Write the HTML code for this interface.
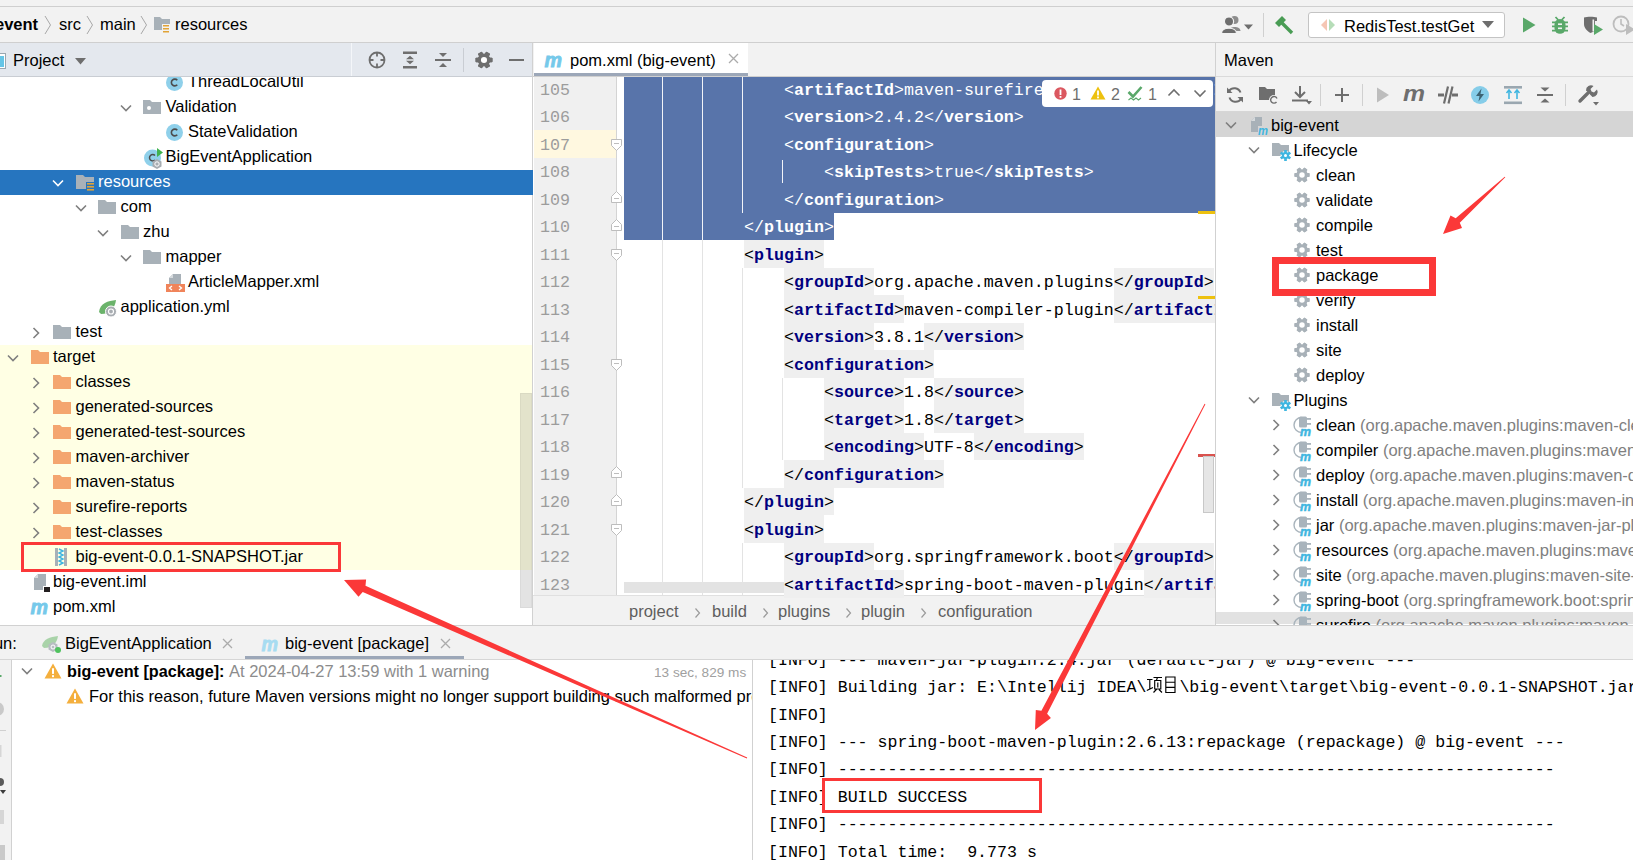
<!DOCTYPE html><html><head><meta charset="utf-8"><style>
html,body{margin:0;padding:0;width:1633px;height:860px;overflow:hidden;background:#F2F2F2;position:relative;font-family:"Liberation Sans",sans-serif}
div{position:absolute;box-sizing:border-box}
.t{white-space:pre}
</style></head><body>
<div style="left:0px;top:0px;width:1633px;height:6px;background:#F2F2F2;"></div>
<div style="left:0px;top:6px;width:1633px;height:1px;background:#CFCFCF;"></div>
<div style="left:0px;top:7px;width:1633px;height:35px;background:#F2F2F2;"></div>
<div style="left:0px;top:42px;width:1633px;height:1px;background:#CFCFCF;"></div>
<div style="left:0px;top:43px;width:533px;height:33px;background:#E4E8EE;"></div>
<div style="left:0px;top:76px;width:533px;height:1px;background:#C9CDD3;"></div>
<div style="left:0px;top:77px;width:533px;height:548px;background:#FFFFFF;"></div>
<div style="left:532px;top:43px;width:1px;height:582px;background:#D1D1D1;"></div>
<div style="left:533px;top:43px;width:682px;height:33px;background:#F2F2F2;"></div>
<div style="left:534px;top:43px;width:214px;height:30px;background:#FFFFFF;"></div>
<div style="left:534px;top:73px;width:214px;height:3px;background:#9CA7B8;"></div>
<div style="left:533px;top:76px;width:682px;height:1px;background:#CFCFCF;"></div>
<div style="left:533px;top:77px;width:682px;height:518px;background:#FFFFFF;"></div>
<div style="left:534px;top:77px;width:83px;height:518px;background:#F0F0F0;"></div>
<div style="left:533px;top:595px;width:682px;height:30px;background:#F2F2F2;"></div>
<div style="left:533px;top:595px;width:682px;height:1px;background:#E0E0E0;"></div>
<div style="left:1215px;top:43px;width:1px;height:582px;background:#D1D1D1;"></div>
<div style="left:1216px;top:43px;width:417px;height:68px;background:#F2F2F2;"></div>
<div style="left:1216px;top:111px;width:417px;height:1px;background:#D6D6D6;"></div>
<div style="left:1216px;top:112px;width:417px;height:513px;background:#FFFFFF;"></div>
<div style="left:0px;top:625px;width:1633px;height:1px;background:#D1D1D1;"></div>
<div style="left:0px;top:626px;width:1633px;height:33px;background:#F2F2F2;"></div>
<div style="left:0px;top:659px;width:1633px;height:1px;background:#D6D6D6;"></div>
<div style="left:0px;top:660px;width:11px;height:200px;background:#F2F2F2;"></div>
<div style="left:11px;top:660px;width:1px;height:200px;background:#D1D1D1;"></div>
<div style="left:12px;top:660px;width:740px;height:200px;background:#FFFFFF;"></div>
<div style="left:752px;top:660px;width:1px;height:200px;background:#D1D1D1;"></div>
<div style="left:753px;top:660px;width:880px;height:200px;background:#FFFFFF;"></div>
<div style="left:0px;top:170px;width:533px;height:25px;background:#2675BF;"></div>
<div style="left:0px;top:345px;width:532px;height:225px;background:#FFFFE4;"></div>
<svg style="position:absolute;left:164.5px;top:73px;" width="19" height="19" viewBox="0 0 19 19"><circle cx="9.5" cy="9.5" r="8.5" fill="#8FD0EA"/><path d="M12.3 7.2 A3.4 3.4 0 1 0 12.3 11.8" fill="none" stroke="#4D4D4D" stroke-width="1.6"/></svg>
<div class="t" style="left:188.0px;top:69px;font-size:16.5px;line-height:25px;color:#000;font-weight:400;font-family:'Liberation Sans', sans-serif;">ThreadLocalUtil</div>
<svg style="position:absolute;left:118.5px;top:102.5px;" width="14" height="10" viewBox="0 0 14 10"><path d="M2 2.5 L7 7.5 L12 2.5" fill="none" stroke="#7F7F7F" stroke-width="1.6"/></svg>
<svg style="position:absolute;left:142.0px;top:97.5px;" width="20" height="18" viewBox="0 0 20 18"><path d="M1 2 H8 L10 4 H19 V16 H1 Z" fill="#A8B1B8"/><circle cx="7" cy="10" r="2" fill="#fff"/></svg>
<div class="t" style="left:165.5px;top:94px;font-size:16.5px;line-height:25px;color:#000;font-weight:400;font-family:'Liberation Sans', sans-serif;">Validation</div>
<svg style="position:absolute;left:164.5px;top:123px;" width="19" height="19" viewBox="0 0 19 19"><circle cx="9.5" cy="9.5" r="8.5" fill="#8FD0EA"/><path d="M12.3 7.2 A3.4 3.4 0 1 0 12.3 11.8" fill="none" stroke="#4D4D4D" stroke-width="1.6"/></svg>
<div class="t" style="left:188.0px;top:119px;font-size:16.5px;line-height:25px;color:#000;font-weight:400;font-family:'Liberation Sans', sans-serif;">StateValidation</div>
<svg style="position:absolute;left:143.0px;top:147px;" width="22" height="22" viewBox="0 0 22 22"><circle cx="9.5" cy="11" r="8.5" fill="#8FD0EA"/><path d="M12 8.5 A3.2 3.2 0 1 0 12 13" fill="none" stroke="#4D4D4D" stroke-width="1.5"/><path d="M14 1 L20 5.5 L14 10 Z" fill="#3FB24F"/><polygon points="14,12 18.5,14.5 18.5,19.5 14,22 9.5,19.5 9.5,14.5" fill="#A8ADB2"/><circle cx="14" cy="17" r="2.2" fill="none" stroke="#fff" stroke-width="1"/></svg>
<div class="t" style="left:165.5px;top:144px;font-size:16.5px;line-height:25px;color:#000;font-weight:400;font-family:'Liberation Sans', sans-serif;">BigEventApplication</div>
<svg style="position:absolute;left:51.0px;top:177.5px;" width="14" height="10" viewBox="0 0 14 10"><path d="M2 2.5 L7 7.5 L12 2.5" fill="none" stroke="#FFFFFF" stroke-width="1.6"/></svg>
<svg style="position:absolute;left:74.5px;top:172.5px;" width="20" height="20" viewBox="0 0 20 20"><path d="M1 2 H8 L10 4 H19 V16 H1 Z" fill="#A8B1B8"/><rect x="11" y="9" width="9" height="11" fill="#2675BF"/><g fill="#E1A336"><rect x="12" y="10" width="7" height="1.6"/><rect x="12" y="13" width="7" height="1.6"/><rect x="12" y="16" width="7" height="1.6"/></g></svg>
<div class="t" style="left:98.0px;top:169px;font-size:16.5px;line-height:25px;color:#FFFFFF;font-weight:400;font-family:'Liberation Sans', sans-serif;">resources</div>
<svg style="position:absolute;left:73.5px;top:202.5px;" width="14" height="10" viewBox="0 0 14 10"><path d="M2 2.5 L7 7.5 L12 2.5" fill="none" stroke="#7F7F7F" stroke-width="1.6"/></svg>
<svg style="position:absolute;left:97.0px;top:197.5px;" width="20" height="18" viewBox="0 0 20 18"><path d="M1 2 H8 L10 4 H19 V16 H1 Z" fill="#A8B1B8"/></svg>
<div class="t" style="left:120.5px;top:194px;font-size:16.5px;line-height:25px;color:#000;font-weight:400;font-family:'Liberation Sans', sans-serif;">com</div>
<svg style="position:absolute;left:96.0px;top:227.5px;" width="14" height="10" viewBox="0 0 14 10"><path d="M2 2.5 L7 7.5 L12 2.5" fill="none" stroke="#7F7F7F" stroke-width="1.6"/></svg>
<svg style="position:absolute;left:119.5px;top:222.5px;" width="20" height="18" viewBox="0 0 20 18"><path d="M1 2 H8 L10 4 H19 V16 H1 Z" fill="#A8B1B8"/></svg>
<div class="t" style="left:143.0px;top:219px;font-size:16.5px;line-height:25px;color:#000;font-weight:400;font-family:'Liberation Sans', sans-serif;">zhu</div>
<svg style="position:absolute;left:118.5px;top:252.5px;" width="14" height="10" viewBox="0 0 14 10"><path d="M2 2.5 L7 7.5 L12 2.5" fill="none" stroke="#7F7F7F" stroke-width="1.6"/></svg>
<svg style="position:absolute;left:142.0px;top:247.5px;" width="20" height="18" viewBox="0 0 20 18"><path d="M1 2 H8 L10 4 H19 V16 H1 Z" fill="#A8B1B8"/></svg>
<div class="t" style="left:165.5px;top:244px;font-size:16.5px;line-height:25px;color:#000;font-weight:400;font-family:'Liberation Sans', sans-serif;">mapper</div>
<svg style="position:absolute;left:165.5px;top:273px;" width="19" height="20" viewBox="0 0 19 20"><path d="M7 1 H15 V12 H3 V5 Z" fill="#A8B1B8"/><path d="M3 5 L7 1 V5 Z" fill="#D6DADD"/><rect x="0" y="11" width="19" height="8" fill="#F0845A"/><path d="M6 13 L3.5 15 L6 17 M13 13 L15.5 15 L13 17" fill="none" stroke="#fff" stroke-width="1.3"/></svg>
<div class="t" style="left:188.0px;top:269px;font-size:16.5px;line-height:25px;color:#000;font-weight:400;font-family:'Liberation Sans', sans-serif;">ArticleMapper.xml</div>
<svg style="position:absolute;left:98.0px;top:298px;" width="20" height="20" viewBox="0 0 20 20"><path d="M1 14 C2 5 10 3 18 2 C17 10 12 16 3 16 Z" fill="#6BB36B"/><circle cx="13" cy="13.5" r="5.5" fill="#A8ADB2" stroke="#fff" stroke-width="1"/><circle cx="13" cy="13.5" r="2.5" fill="none" stroke="#fff" stroke-width="1.2"/></svg>
<div class="t" style="left:120.5px;top:294px;font-size:16.5px;line-height:25px;color:#000;font-weight:400;font-family:'Liberation Sans', sans-serif;">application.yml</div>
<svg style="position:absolute;left:30.5px;top:325.5px;" width="10" height="14" viewBox="0 0 10 14"><path d="M2.5 2 L7.5 7 L2.5 12" fill="none" stroke="#7F7F7F" stroke-width="1.6"/></svg>
<svg style="position:absolute;left:52.0px;top:322.5px;" width="20" height="18" viewBox="0 0 20 18"><path d="M1 2 H8 L10 4 H19 V16 H1 Z" fill="#A8B1B8"/></svg>
<div class="t" style="left:75.5px;top:319px;font-size:16.5px;line-height:25px;color:#000;font-weight:400;font-family:'Liberation Sans', sans-serif;">test</div>
<svg style="position:absolute;left:6.0px;top:352.5px;" width="14" height="10" viewBox="0 0 14 10"><path d="M2 2.5 L7 7.5 L12 2.5" fill="none" stroke="#7F7F7F" stroke-width="1.6"/></svg>
<svg style="position:absolute;left:29.5px;top:347.5px;" width="20" height="18" viewBox="0 0 20 18"><path d="M1 2 H8 L10 4 H19 V16 H1 Z" fill="#F4A66F"/></svg>
<div class="t" style="left:53.0px;top:344px;font-size:16.5px;line-height:25px;color:#000;font-weight:400;font-family:'Liberation Sans', sans-serif;">target</div>
<svg style="position:absolute;left:30.5px;top:375.5px;" width="10" height="14" viewBox="0 0 10 14"><path d="M2.5 2 L7.5 7 L2.5 12" fill="none" stroke="#7F7F7F" stroke-width="1.6"/></svg>
<svg style="position:absolute;left:52.0px;top:372.5px;" width="20" height="18" viewBox="0 0 20 18"><path d="M1 2 H8 L10 4 H19 V16 H1 Z" fill="#F4A66F"/></svg>
<div class="t" style="left:75.5px;top:369px;font-size:16.5px;line-height:25px;color:#000;font-weight:400;font-family:'Liberation Sans', sans-serif;">classes</div>
<svg style="position:absolute;left:30.5px;top:400.5px;" width="10" height="14" viewBox="0 0 10 14"><path d="M2.5 2 L7.5 7 L2.5 12" fill="none" stroke="#7F7F7F" stroke-width="1.6"/></svg>
<svg style="position:absolute;left:52.0px;top:397.5px;" width="20" height="18" viewBox="0 0 20 18"><path d="M1 2 H8 L10 4 H19 V16 H1 Z" fill="#F4A66F"/></svg>
<div class="t" style="left:75.5px;top:394px;font-size:16.5px;line-height:25px;color:#000;font-weight:400;font-family:'Liberation Sans', sans-serif;">generated-sources</div>
<svg style="position:absolute;left:30.5px;top:425.5px;" width="10" height="14" viewBox="0 0 10 14"><path d="M2.5 2 L7.5 7 L2.5 12" fill="none" stroke="#7F7F7F" stroke-width="1.6"/></svg>
<svg style="position:absolute;left:52.0px;top:422.5px;" width="20" height="18" viewBox="0 0 20 18"><path d="M1 2 H8 L10 4 H19 V16 H1 Z" fill="#F4A66F"/></svg>
<div class="t" style="left:75.5px;top:419px;font-size:16.5px;line-height:25px;color:#000;font-weight:400;font-family:'Liberation Sans', sans-serif;">generated-test-sources</div>
<svg style="position:absolute;left:30.5px;top:450.5px;" width="10" height="14" viewBox="0 0 10 14"><path d="M2.5 2 L7.5 7 L2.5 12" fill="none" stroke="#7F7F7F" stroke-width="1.6"/></svg>
<svg style="position:absolute;left:52.0px;top:447.5px;" width="20" height="18" viewBox="0 0 20 18"><path d="M1 2 H8 L10 4 H19 V16 H1 Z" fill="#F4A66F"/></svg>
<div class="t" style="left:75.5px;top:444px;font-size:16.5px;line-height:25px;color:#000;font-weight:400;font-family:'Liberation Sans', sans-serif;">maven-archiver</div>
<svg style="position:absolute;left:30.5px;top:475.5px;" width="10" height="14" viewBox="0 0 10 14"><path d="M2.5 2 L7.5 7 L2.5 12" fill="none" stroke="#7F7F7F" stroke-width="1.6"/></svg>
<svg style="position:absolute;left:52.0px;top:472.5px;" width="20" height="18" viewBox="0 0 20 18"><path d="M1 2 H8 L10 4 H19 V16 H1 Z" fill="#F4A66F"/></svg>
<div class="t" style="left:75.5px;top:469px;font-size:16.5px;line-height:25px;color:#000;font-weight:400;font-family:'Liberation Sans', sans-serif;">maven-status</div>
<svg style="position:absolute;left:30.5px;top:500.5px;" width="10" height="14" viewBox="0 0 10 14"><path d="M2.5 2 L7.5 7 L2.5 12" fill="none" stroke="#7F7F7F" stroke-width="1.6"/></svg>
<svg style="position:absolute;left:52.0px;top:497.5px;" width="20" height="18" viewBox="0 0 20 18"><path d="M1 2 H8 L10 4 H19 V16 H1 Z" fill="#F4A66F"/></svg>
<div class="t" style="left:75.5px;top:494px;font-size:16.5px;line-height:25px;color:#000;font-weight:400;font-family:'Liberation Sans', sans-serif;">surefire-reports</div>
<svg style="position:absolute;left:30.5px;top:525.5px;" width="10" height="14" viewBox="0 0 10 14"><path d="M2.5 2 L7.5 7 L2.5 12" fill="none" stroke="#7F7F7F" stroke-width="1.6"/></svg>
<svg style="position:absolute;left:52.0px;top:522.5px;" width="20" height="18" viewBox="0 0 20 18"><path d="M1 2 H8 L10 4 H19 V16 H1 Z" fill="#F4A66F"/></svg>
<div class="t" style="left:75.5px;top:519px;font-size:16.5px;line-height:25px;color:#000;font-weight:400;font-family:'Liberation Sans', sans-serif;">test-classes</div>
<svg style="position:absolute;left:55.0px;top:548px;" width="13" height="19" viewBox="0 0 13 19"><rect x="0" y="0" width="3" height="18" fill="#A8B1B8"/><rect x="9" y="0" width="3" height="18" fill="#A8B1B8"/><path d="M4 1 L8 3 L4 5 L8 7 L4 9 L8 11 L4 13 L8 15 L4 17" fill="none" stroke="#40B6E0" stroke-width="1.4"/></svg>
<div class="t" style="left:75.5px;top:544px;font-size:16.5px;line-height:25px;color:#000;font-weight:400;font-family:'Liberation Sans', sans-serif;">big-event-0.0.1-SNAPSHOT.jar</div>
<svg style="position:absolute;left:32.5px;top:573px;" width="18" height="20" viewBox="0 0 18 20"><path d="M5 1 H13 V17 H1 V5 Z" fill="#A8B1B8"/><path d="M1 5 L5 1 V5 Z" fill="#D6DADD"/><rect x="10" y="13" width="8" height="7" fill="#fff"/><rect x="11" y="14" width="6" height="5" fill="#231F20"/></svg>
<div class="t" style="left:53.0px;top:569px;font-size:16.5px;line-height:25px;color:#000;font-weight:400;font-family:'Liberation Sans', sans-serif;">big-event.iml</div>
<svg style="position:absolute;left:29.5px;top:598.5px;" width="21" height="18" viewBox="0 0 21 18"><text x="0.5" y="14.5" font-family="Liberation Sans" font-weight="700" font-style="italic" font-size="21" fill="#76C9EA" stroke="#76C9EA" stroke-width="0.9" textLength="17.5" lengthAdjust="spacingAndGlyphs">m</text></svg>
<div class="t" style="left:53.0px;top:594px;font-size:16.5px;line-height:25px;color:#000;font-weight:400;font-family:'Liberation Sans', sans-serif;">pom.xml</div>
<div style="left:0px;top:43px;width:532px;height:33px;background:#E4E8EE;"></div>
<div style="left:0px;top:76px;width:532px;height:1px;background:#C9CDD3;"></div>
<div style="left:520px;top:393px;width:12px;height:215px;background:rgba(0,0,0,0.11);border:1px solid rgba(0,0,0,0.04)"></div>
<svg style="position:absolute;left:-6px;top:53px;" width="14" height="17" viewBox="0 0 14 17"><rect x="0.5" y="0.5" width="11" height="15" fill="#fff" stroke="#9AA7B0"/><rect x="2" y="3" width="8" height="11" fill="#40B6E0" opacity="0.8"/></svg>
<div class="t" style="left:13px;top:48px;font-size:16.5px;line-height:25px;color:#000;font-weight:400;font-family:'Liberation Sans', sans-serif;">Project</div>
<svg style="position:absolute;left:75px;top:58px;" width="11" height="7" viewBox="0 0 11 7"><path d="M0 0 H11 L5.5 6.5 Z" fill="#6E6E6E"/></svg>
<div style="left:351px;top:43px;width:1px;height:33px;background:#F4F6F9;"></div>
<svg style="position:absolute;left:368px;top:51px;" width="18" height="18" viewBox="0 0 18 18"><circle cx="9" cy="9" r="7.5" fill="none" stroke="#6E6E6E" stroke-width="1.8"/><path d="M9 1 V5.5 M9 12.5 V17 M1 9 H5.5 M12.5 9 H17" stroke="#6E6E6E" stroke-width="1.8"/></svg>
<svg style="position:absolute;left:401px;top:51px;" width="18" height="18" viewBox="0 0 18 18"><path d="M2 1.8 H16 M2 16.2 H16" stroke="#6E6E6E" stroke-width="2.4"/><path d="M5 8.3 L9 4.8 L13 8.3 Z M5 9.7 L9 13.2 L13 9.7 Z" fill="#6E6E6E"/></svg>
<svg style="position:absolute;left:434px;top:51px;" width="18" height="18" viewBox="0 0 18 18"><path d="M1 9 H17" stroke="#6E6E6E" stroke-width="2"/><path d="M5 2 L9 6 L13 2 Z M5 16 L9 12 L13 16 Z" fill="#6E6E6E"/></svg>
<div style="left:463px;top:48px;width:1px;height:24px;background:#C9CDD3;"></div>
<svg style="position:absolute;left:475px;top:51px;" width="18" height="18" viewBox="0 0 18 18"><circle cx="9.0" cy="9.0" r="6.4799999999999995" fill="#6E6E6E"/><rect x="6.66" y="0.5400000000000009" width="4.68" height="16.919999999999998" rx="0.8" fill="#6E6E6E" transform="rotate(30 9.0 9.0)"/><rect x="6.66" y="0.5400000000000009" width="4.68" height="16.919999999999998" rx="0.8" fill="#6E6E6E" transform="rotate(90 9.0 9.0)"/><rect x="6.66" y="0.5400000000000009" width="4.68" height="16.919999999999998" rx="0.8" fill="#6E6E6E" transform="rotate(150 9.0 9.0)"/><rect x="6.66" y="0.5400000000000009" width="4.68" height="16.919999999999998" rx="0.8" fill="#6E6E6E" transform="rotate(210 9.0 9.0)"/><rect x="6.66" y="0.5400000000000009" width="4.68" height="16.919999999999998" rx="0.8" fill="#6E6E6E" transform="rotate(270 9.0 9.0)"/><rect x="6.66" y="0.5400000000000009" width="4.68" height="16.919999999999998" rx="0.8" fill="#6E6E6E" transform="rotate(330 9.0 9.0)"/><circle cx="9.0" cy="9.0" r="3.06" fill="#fff"/></svg>
<div style="left:509px;top:59px;width:15px;height:2px;background:#6E6E6E;"></div>
<div class="t" style="left:-5px;top:12px;font-size:16.5px;line-height:25px;color:#000;font-weight:700;font-family:'Liberation Sans', sans-serif;">event</div>
<svg style="position:absolute;left:44px;top:15px;" width="8" height="20" viewBox="0 0 8 20"><path d="M1 1 L6.5 10 L1 19" fill="none" stroke="#A8A8A8" stroke-width="1"/></svg>
<div class="t" style="left:59px;top:12px;font-size:16.5px;line-height:25px;color:#000;font-weight:400;font-family:'Liberation Sans', sans-serif;">src</div>
<svg style="position:absolute;left:86px;top:15px;" width="8" height="20" viewBox="0 0 8 20"><path d="M1 1 L6.5 10 L1 19" fill="none" stroke="#A8A8A8" stroke-width="1"/></svg>
<div class="t" style="left:100px;top:12px;font-size:16.5px;line-height:25px;color:#000;font-weight:400;font-family:'Liberation Sans', sans-serif;">main</div>
<svg style="position:absolute;left:140px;top:15px;" width="8" height="20" viewBox="0 0 8 20"><path d="M1 1 L6.5 10 L1 19" fill="none" stroke="#A8A8A8" stroke-width="1"/></svg>
<svg style="position:absolute;left:153px;top:16px;" width="20" height="20" viewBox="0 0 20 20"><path d="M1 1 H7 L9 3 H17 V14 H1 Z" fill="#A8B1B8"/><rect x="9" y="8" width="8" height="11" fill="#F2F2F2"/><g fill="#E1A336"><rect x="10" y="9" width="6" height="1.5"/><rect x="10" y="12" width="6" height="1.5"/><rect x="10" y="15" width="6" height="1.5"/></g></svg>
<div class="t" style="left:175px;top:12px;font-size:16.5px;line-height:25px;color:#000;font-weight:400;font-family:'Liberation Sans', sans-serif;">resources</div>
<svg style="position:absolute;left:544px;top:52px;" width="21" height="18" viewBox="0 0 21 18"><text x="0.5" y="14.5" font-family="Liberation Sans" font-weight="700" font-style="italic" font-size="21" fill="#76C9EA" stroke="#76C9EA" stroke-width="0.9" textLength="17.5" lengthAdjust="spacingAndGlyphs">m</text></svg>
<div class="t" style="left:570px;top:48px;font-size:16.5px;line-height:25px;color:#000;font-weight:400;font-family:'Liberation Sans', sans-serif;">pom.xml (big-event)</div>
<svg style="position:absolute;left:728px;top:53px;" width="11" height="11" viewBox="0 0 11 11"><path d="M1 1 L10 10 M10 1 L1 10" stroke="#ABABAB" stroke-width="1.3"/></svg>
<div style="left:534px;top:130.0px;width:90px;height:27.5px;background:#FFF8E0;"></div>
<div style="left:617px;top:77px;width:7px;height:518px;background:#FFFFFF;"></div>
<div style="left:534px;top:130.0px;width:83px;height:27.5px;background:#FFF8E0;"></div>
<div style="left:624px;top:582px;width:293px;height:11px;background:#E3E3E3;"></div>
<div style="left:904px;top:570px;width:160px;height:24px;background:#FFFFFF;"></div>
<div style="left:744.0px;top:240.0px;width:80.0px;height:27.5px;background:#EFEFEF;"></div>
<div style="left:784.0px;top:267.5px;width:90.0px;height:27.5px;background:#EFEFEF;"></div>
<div style="left:1114.0px;top:267.5px;width:100.0px;height:27.5px;background:#EFEFEF;"></div>
<div style="left:784.0px;top:295.0px;width:120.0px;height:27.5px;background:#EFEFEF;"></div>
<div style="left:1114.0px;top:295.0px;width:101.0px;height:27.5px;background:#EFEFEF;"></div>
<div style="left:784.0px;top:322.5px;width:90.0px;height:27.5px;background:#EFEFEF;"></div>
<div style="left:924.0px;top:322.5px;width:100.0px;height:27.5px;background:#EFEFEF;"></div>
<div style="left:784.0px;top:350.0px;width:150.0px;height:27.5px;background:#EFEFEF;"></div>
<div style="left:824.0px;top:377.5px;width:80.0px;height:27.5px;background:#EFEFEF;"></div>
<div style="left:934.0px;top:377.5px;width:90.0px;height:27.5px;background:#EFEFEF;"></div>
<div style="left:824.0px;top:405.0px;width:80.0px;height:27.5px;background:#EFEFEF;"></div>
<div style="left:934.0px;top:405.0px;width:90.0px;height:27.5px;background:#EFEFEF;"></div>
<div style="left:824.0px;top:432.5px;width:100.0px;height:27.5px;background:#EFEFEF;"></div>
<div style="left:974.0px;top:432.5px;width:110.0px;height:27.5px;background:#EFEFEF;"></div>
<div style="left:784.0px;top:460.0px;width:160.0px;height:27.5px;background:#EFEFEF;"></div>
<div style="left:744.0px;top:487.5px;width:90.0px;height:27.5px;background:#EFEFEF;"></div>
<div style="left:744.0px;top:515.0px;width:80.0px;height:27.5px;background:#EFEFEF;"></div>
<div style="left:784.0px;top:542.5px;width:90.0px;height:27.5px;background:#EFEFEF;"></div>
<div style="left:1114.0px;top:542.5px;width:100.0px;height:27.5px;background:#EFEFEF;"></div>
<div style="left:784.0px;top:570.0px;width:120.0px;height:27.5px;background:#EFEFEF;"></div>
<div style="left:1144.0px;top:570.0px;width:71.0px;height:27.5px;background:#EFEFEF;"></div>
<div style="left:662px;top:240.0px;width:1px;height:355.0px;background:#E3E3E3;"></div>
<div style="left:702px;top:240.0px;width:1px;height:355.0px;background:#E3E3E3;"></div>
<div style="left:742px;top:267.5px;width:1px;height:220.0px;background:#E3E3E3;"></div>
<div style="left:742px;top:542.5px;width:1px;height:52.5px;background:#E3E3E3;"></div>
<div style="left:782px;top:377.5px;width:1px;height:82.5px;background:#E3E3E3;"></div>
<div style="left:624px;top:77px;width:591px;height:135.5px;background:#5874AA;"></div>
<div style="left:624px;top:212.5px;width:210px;height:27.5px;background:#5874AA;"></div>
<div style="left:662px;top:77px;width:1px;height:163.0px;background:#F2F4F8;"></div>
<div style="left:702px;top:77px;width:1px;height:163.0px;background:#F2F4F8;"></div>
<div style="left:742px;top:77px;width:1px;height:135.5px;background:#F2F4F8;"></div>
<div style="left:782px;top:159.5px;width:1px;height:23.5px;background:#F2F4F8;"></div>
<div style="left:0;top:77px;width:1215px;height:518px;overflow:hidden">
<div class="t" style="left:624px;top:-0.5px;font-family:'Liberation Mono', monospace;font-size:16.667px;line-height:27.5px"><span style="color:#FFFFFF">                </span><span style="color:#FFFFFF">&lt;</span><b style="color:#FFFFFF">artifactId</b><span style="color:#FFFFFF">&gt;</span><span style="color:#FFFFFF">maven-surefire-plugin</span><span style="color:#FFFFFF">&lt;/</span><b style="color:#FFFFFF">artifactId</b><span style="color:#FFFFFF">&gt;</span></div>
<div class="t" style="left:540px;top:-0.5px;font-family:'Liberation Mono', monospace;font-size:16.667px;line-height:27.5px;color:#9C9C9C">105</div>
<div class="t" style="left:624px;top:27.0px;font-family:'Liberation Mono', monospace;font-size:16.667px;line-height:27.5px"><span style="color:#FFFFFF">                </span><span style="color:#FFFFFF">&lt;</span><b style="color:#FFFFFF">version</b><span style="color:#FFFFFF">&gt;</span><span style="color:#FFFFFF">2.4.2</span><span style="color:#FFFFFF">&lt;/</span><b style="color:#FFFFFF">version</b><span style="color:#FFFFFF">&gt;</span></div>
<div class="t" style="left:540px;top:27.0px;font-family:'Liberation Mono', monospace;font-size:16.667px;line-height:27.5px;color:#9C9C9C">106</div>
<div class="t" style="left:624px;top:54.5px;font-family:'Liberation Mono', monospace;font-size:16.667px;line-height:27.5px"><span style="color:#FFFFFF">                </span><span style="color:#FFFFFF">&lt;</span><b style="color:#FFFFFF">configuration</b><span style="color:#FFFFFF">&gt;</span></div>
<div class="t" style="left:540px;top:54.5px;font-family:'Liberation Mono', monospace;font-size:16.667px;line-height:27.5px;color:#9C9C9C">107</div>
<div class="t" style="left:624px;top:82.0px;font-family:'Liberation Mono', monospace;font-size:16.667px;line-height:27.5px"><span style="color:#FFFFFF">                    </span><span style="color:#FFFFFF">&lt;</span><b style="color:#FFFFFF">skipTests</b><span style="color:#FFFFFF">&gt;</span><span style="color:#FFFFFF">true</span><span style="color:#FFFFFF">&lt;/</span><b style="color:#FFFFFF">skipTests</b><span style="color:#FFFFFF">&gt;</span></div>
<div class="t" style="left:540px;top:82.0px;font-family:'Liberation Mono', monospace;font-size:16.667px;line-height:27.5px;color:#9C9C9C">108</div>
<div class="t" style="left:624px;top:109.5px;font-family:'Liberation Mono', monospace;font-size:16.667px;line-height:27.5px"><span style="color:#FFFFFF">                </span><span style="color:#FFFFFF">&lt;/</span><b style="color:#FFFFFF">configuration</b><span style="color:#FFFFFF">&gt;</span></div>
<div class="t" style="left:540px;top:109.5px;font-family:'Liberation Mono', monospace;font-size:16.667px;line-height:27.5px;color:#9C9C9C">109</div>
<div class="t" style="left:624px;top:137.0px;font-family:'Liberation Mono', monospace;font-size:16.667px;line-height:27.5px"><span style="color:#FFFFFF">            </span><span style="color:#FFFFFF">&lt;/</span><b style="color:#FFFFFF">plugin</b><span style="color:#FFFFFF">&gt;</span></div>
<div class="t" style="left:540px;top:137.0px;font-family:'Liberation Mono', monospace;font-size:16.667px;line-height:27.5px;color:#9C9C9C">110</div>
<div class="t" style="left:624px;top:164.5px;font-family:'Liberation Mono', monospace;font-size:16.667px;line-height:27.5px"><span style="color:#000000">            </span><span style="color:#000000">&lt;</span><b style="color:#000080">plugin</b><span style="color:#000000">&gt;</span></div>
<div class="t" style="left:540px;top:164.5px;font-family:'Liberation Mono', monospace;font-size:16.667px;line-height:27.5px;color:#9C9C9C">111</div>
<div class="t" style="left:624px;top:192.0px;font-family:'Liberation Mono', monospace;font-size:16.667px;line-height:27.5px"><span style="color:#000000">                </span><span style="color:#000000">&lt;</span><b style="color:#000080">groupId</b><span style="color:#000000">&gt;</span><span style="color:#000000">org.apache.maven.plugins</span><span style="color:#000000">&lt;/</span><b style="color:#000080">groupId</b><span style="color:#000000">&gt;</span></div>
<div class="t" style="left:540px;top:192.0px;font-family:'Liberation Mono', monospace;font-size:16.667px;line-height:27.5px;color:#9C9C9C">112</div>
<div class="t" style="left:624px;top:219.5px;font-family:'Liberation Mono', monospace;font-size:16.667px;line-height:27.5px"><span style="color:#000000">                </span><span style="color:#000000">&lt;</span><b style="color:#000080">artifactId</b><span style="color:#000000">&gt;</span><span style="color:#000000">maven-compiler-plugin</span><span style="color:#000000">&lt;/</span><b style="color:#000080">artifactId</b><span style="color:#000000">&gt;</span></div>
<div class="t" style="left:540px;top:219.5px;font-family:'Liberation Mono', monospace;font-size:16.667px;line-height:27.5px;color:#9C9C9C">113</div>
<div class="t" style="left:624px;top:247.0px;font-family:'Liberation Mono', monospace;font-size:16.667px;line-height:27.5px"><span style="color:#000000">                </span><span style="color:#000000">&lt;</span><b style="color:#000080">version</b><span style="color:#000000">&gt;</span><span style="color:#000000">3.8.1</span><span style="color:#000000">&lt;/</span><b style="color:#000080">version</b><span style="color:#000000">&gt;</span></div>
<div class="t" style="left:540px;top:247.0px;font-family:'Liberation Mono', monospace;font-size:16.667px;line-height:27.5px;color:#9C9C9C">114</div>
<div class="t" style="left:624px;top:274.5px;font-family:'Liberation Mono', monospace;font-size:16.667px;line-height:27.5px"><span style="color:#000000">                </span><span style="color:#000000">&lt;</span><b style="color:#000080">configuration</b><span style="color:#000000">&gt;</span></div>
<div class="t" style="left:540px;top:274.5px;font-family:'Liberation Mono', monospace;font-size:16.667px;line-height:27.5px;color:#9C9C9C">115</div>
<div class="t" style="left:624px;top:302.0px;font-family:'Liberation Mono', monospace;font-size:16.667px;line-height:27.5px"><span style="color:#000000">                    </span><span style="color:#000000">&lt;</span><b style="color:#000080">source</b><span style="color:#000000">&gt;</span><span style="color:#000000">1.8</span><span style="color:#000000">&lt;/</span><b style="color:#000080">source</b><span style="color:#000000">&gt;</span></div>
<div class="t" style="left:540px;top:302.0px;font-family:'Liberation Mono', monospace;font-size:16.667px;line-height:27.5px;color:#9C9C9C">116</div>
<div class="t" style="left:624px;top:329.5px;font-family:'Liberation Mono', monospace;font-size:16.667px;line-height:27.5px"><span style="color:#000000">                    </span><span style="color:#000000">&lt;</span><b style="color:#000080">target</b><span style="color:#000000">&gt;</span><span style="color:#000000">1.8</span><span style="color:#000000">&lt;/</span><b style="color:#000080">target</b><span style="color:#000000">&gt;</span></div>
<div class="t" style="left:540px;top:329.5px;font-family:'Liberation Mono', monospace;font-size:16.667px;line-height:27.5px;color:#9C9C9C">117</div>
<div class="t" style="left:624px;top:357.0px;font-family:'Liberation Mono', monospace;font-size:16.667px;line-height:27.5px"><span style="color:#000000">                    </span><span style="color:#000000">&lt;</span><b style="color:#000080">encoding</b><span style="color:#000000">&gt;</span><span style="color:#000000">UTF-8</span><span style="color:#000000">&lt;/</span><b style="color:#000080">encoding</b><span style="color:#000000">&gt;</span></div>
<div class="t" style="left:540px;top:357.0px;font-family:'Liberation Mono', monospace;font-size:16.667px;line-height:27.5px;color:#9C9C9C">118</div>
<div class="t" style="left:624px;top:384.5px;font-family:'Liberation Mono', monospace;font-size:16.667px;line-height:27.5px"><span style="color:#000000">                </span><span style="color:#000000">&lt;/</span><b style="color:#000080">configuration</b><span style="color:#000000">&gt;</span></div>
<div class="t" style="left:540px;top:384.5px;font-family:'Liberation Mono', monospace;font-size:16.667px;line-height:27.5px;color:#9C9C9C">119</div>
<div class="t" style="left:624px;top:412.0px;font-family:'Liberation Mono', monospace;font-size:16.667px;line-height:27.5px"><span style="color:#000000">            </span><span style="color:#000000">&lt;/</span><b style="color:#000080">plugin</b><span style="color:#000000">&gt;</span></div>
<div class="t" style="left:540px;top:412.0px;font-family:'Liberation Mono', monospace;font-size:16.667px;line-height:27.5px;color:#9C9C9C">120</div>
<div class="t" style="left:624px;top:439.5px;font-family:'Liberation Mono', monospace;font-size:16.667px;line-height:27.5px"><span style="color:#000000">            </span><span style="color:#000000">&lt;</span><b style="color:#000080">plugin</b><span style="color:#000000">&gt;</span></div>
<div class="t" style="left:540px;top:439.5px;font-family:'Liberation Mono', monospace;font-size:16.667px;line-height:27.5px;color:#9C9C9C">121</div>
<div class="t" style="left:624px;top:467.0px;font-family:'Liberation Mono', monospace;font-size:16.667px;line-height:27.5px"><span style="color:#000000">                </span><span style="color:#000000">&lt;</span><b style="color:#000080">groupId</b><span style="color:#000000">&gt;</span><span style="color:#000000">org.springframework.boot</span><span style="color:#000000">&lt;/</span><b style="color:#000080">groupId</b><span style="color:#000000">&gt;</span></div>
<div class="t" style="left:540px;top:467.0px;font-family:'Liberation Mono', monospace;font-size:16.667px;line-height:27.5px;color:#9C9C9C">122</div>
<div class="t" style="left:624px;top:494.5px;font-family:'Liberation Mono', monospace;font-size:16.667px;line-height:27.5px"><span style="color:#000000">                </span><span style="color:#000000">&lt;</span><b style="color:#000080">artifactId</b><span style="color:#000000">&gt;</span><span style="color:#000000">spring-boot-maven-plugin</span><span style="color:#000000">&lt;/</span><b style="color:#000080">artifactId</b><span style="color:#000000">&gt;</span></div>
<div class="t" style="left:540px;top:494.5px;font-family:'Liberation Mono', monospace;font-size:16.667px;line-height:27.5px;color:#9C9C9C">123</div>
</div>
<svg style="position:absolute;left:612px;top:77px;" width="12" height="518" viewBox="0 0 12 518"></svg>
<div style="left:616px;top:77px;width:1px;height:518px;background:#D4D4D4;"></div>
<svg style="position:absolute;left:610px;top:138.0px;" width="13" height="14" viewBox="0 0 13 14"><path d="M1.5 1.5 H11.5 V7.5 L6.5 12.5 L1.5 7.5 Z" fill="#FFFFFF" stroke="#BDBDBD" stroke-width="1"/><path d="M4 5.5 H9" stroke="#BDBDBD" stroke-width="1"/></svg>
<svg style="position:absolute;left:610px;top:248.0px;" width="13" height="14" viewBox="0 0 13 14"><path d="M1.5 1.5 H11.5 V7.5 L6.5 12.5 L1.5 7.5 Z" fill="#FFFFFF" stroke="#BDBDBD" stroke-width="1"/><path d="M4 5.5 H9" stroke="#BDBDBD" stroke-width="1"/></svg>
<svg style="position:absolute;left:610px;top:358.0px;" width="13" height="14" viewBox="0 0 13 14"><path d="M1.5 1.5 H11.5 V7.5 L6.5 12.5 L1.5 7.5 Z" fill="#FFFFFF" stroke="#BDBDBD" stroke-width="1"/><path d="M4 5.5 H9" stroke="#BDBDBD" stroke-width="1"/></svg>
<svg style="position:absolute;left:610px;top:523.0px;" width="13" height="14" viewBox="0 0 13 14"><path d="M1.5 1.5 H11.5 V7.5 L6.5 12.5 L1.5 7.5 Z" fill="#FFFFFF" stroke="#BDBDBD" stroke-width="1"/><path d="M4 5.5 H9" stroke="#BDBDBD" stroke-width="1"/></svg>
<svg style="position:absolute;left:610px;top:190.0px;" width="13" height="14" viewBox="0 0 13 14"><path d="M1.5 12.5 H11.5 V6.5 L6.5 1.5 L1.5 6.5 Z" fill="#FFFFFF" stroke="#BDBDBD" stroke-width="1"/><path d="M4 8.5 H9" stroke="#BDBDBD" stroke-width="1"/></svg>
<svg style="position:absolute;left:610px;top:217.5px;" width="13" height="14" viewBox="0 0 13 14"><path d="M1.5 12.5 H11.5 V6.5 L6.5 1.5 L1.5 6.5 Z" fill="#FFFFFF" stroke="#BDBDBD" stroke-width="1"/><path d="M4 8.5 H9" stroke="#BDBDBD" stroke-width="1"/></svg>
<svg style="position:absolute;left:610px;top:465.0px;" width="13" height="14" viewBox="0 0 13 14"><path d="M1.5 12.5 H11.5 V6.5 L6.5 1.5 L1.5 6.5 Z" fill="#FFFFFF" stroke="#BDBDBD" stroke-width="1"/><path d="M4 8.5 H9" stroke="#BDBDBD" stroke-width="1"/></svg>
<svg style="position:absolute;left:610px;top:492.5px;" width="13" height="14" viewBox="0 0 13 14"><path d="M1.5 12.5 H11.5 V6.5 L6.5 1.5 L1.5 6.5 Z" fill="#FFFFFF" stroke="#BDBDBD" stroke-width="1"/><path d="M4 8.5 H9" stroke="#BDBDBD" stroke-width="1"/></svg>
<div style="left:1042px;top:80px;width:171px;height:27px;background:#FFFFFF;border-radius:4px"></div>
<svg style="position:absolute;left:1054px;top:87px;" width="13" height="13" viewBox="0 0 13 13"><circle cx="6.5" cy="6.5" r="6.2" fill="#DB5860"/><rect x="5.6" y="2.5" width="1.8" height="5.5" fill="#fff"/><rect x="5.6" y="9" width="1.8" height="1.8" fill="#fff"/></svg>
<div class="t" style="left:1072px;top:82px;font-size:16px;line-height:25px;color:#6E6E6E;font-weight:400;font-family:'Liberation Sans', sans-serif;">1</div>
<svg style="position:absolute;left:1090px;top:86px;" width="16" height="14" viewBox="0 0 16 14"><path d="M8 0.5 L15.5 13.5 H0.5 Z" fill="#EDC10F"/><rect x="7.1" y="4.5" width="1.8" height="5" fill="#fff"/><rect x="7.1" y="10.5" width="1.8" height="1.8" fill="#fff"/></svg>
<div class="t" style="left:1111px;top:82px;font-size:16px;line-height:25px;color:#6E6E6E;font-weight:400;font-family:'Liberation Sans', sans-serif;">2</div>
<svg style="position:absolute;left:1127px;top:85px;" width="16" height="18" viewBox="0 0 16 18"><path d="M1.5 7 L6 11.5 L14.5 2" fill="none" stroke="#59A869" stroke-width="2.6"/><path d="M1.5 15 L4 13 L6.5 15 L9 13 L11.5 15 L14 13" fill="none" stroke="#59A869" stroke-width="1.1"/></svg>
<div class="t" style="left:1148px;top:82px;font-size:16px;line-height:25px;color:#6E6E6E;font-weight:400;font-family:'Liberation Sans', sans-serif;">1</div>
<svg style="position:absolute;left:1167px;top:88px;" width="14" height="9" viewBox="0 0 14 9"><path d="M1.5 7.5 L7 2 L12.5 7.5" fill="none" stroke="#6E6E6E" stroke-width="1.6"/></svg>
<svg style="position:absolute;left:1193px;top:89px;" width="14" height="9" viewBox="0 0 14 9"><path d="M1.5 1.5 L7 7 L12.5 1.5" fill="none" stroke="#6E6E6E" stroke-width="1.6"/></svg>
<div style="left:1198px;top:211px;width:17px;height:3px;background:#EDC10F;"></div>
<div style="left:1198px;top:296px;width:17px;height:3px;background:#EDC10F;"></div>
<div style="left:1198px;top:454px;width:17px;height:3px;background:#D9534F;"></div>
<div style="left:1203px;top:456px;width:11px;height:57px;background:#E6E6E6;border:1px solid #C8C8C8"></div>
<div class="t" style="left:629px;top:599px;font-size:16.5px;line-height:25px;color:#5E5E5E;font-weight:400;font-family:'Liberation Sans', sans-serif;">project</div>
<svg style="position:absolute;left:694px;top:607px;" width="7" height="12" viewBox="0 0 7 12"><path d="M1.5 1.5 L5.5 6 L1.5 10.5" fill="none" stroke="#9A9A9A" stroke-width="1.2"/></svg>
<div class="t" style="left:712px;top:599px;font-size:16.5px;line-height:25px;color:#5E5E5E;font-weight:400;font-family:'Liberation Sans', sans-serif;">build</div>
<svg style="position:absolute;left:762px;top:607px;" width="7" height="12" viewBox="0 0 7 12"><path d="M1.5 1.5 L5.5 6 L1.5 10.5" fill="none" stroke="#9A9A9A" stroke-width="1.2"/></svg>
<div class="t" style="left:778px;top:599px;font-size:16.5px;line-height:25px;color:#5E5E5E;font-weight:400;font-family:'Liberation Sans', sans-serif;">plugins</div>
<svg style="position:absolute;left:845px;top:607px;" width="7" height="12" viewBox="0 0 7 12"><path d="M1.5 1.5 L5.5 6 L1.5 10.5" fill="none" stroke="#9A9A9A" stroke-width="1.2"/></svg>
<div class="t" style="left:861px;top:599px;font-size:16.5px;line-height:25px;color:#5E5E5E;font-weight:400;font-family:'Liberation Sans', sans-serif;">plugin</div>
<svg style="position:absolute;left:920px;top:607px;" width="7" height="12" viewBox="0 0 7 12"><path d="M1.5 1.5 L5.5 6 L1.5 10.5" fill="none" stroke="#9A9A9A" stroke-width="1.2"/></svg>
<div class="t" style="left:938px;top:599px;font-size:16.5px;line-height:25px;color:#5E5E5E;font-weight:400;font-family:'Liberation Sans', sans-serif;">configuration</div>
<div class="t" style="left:1224px;top:48px;font-size:16.5px;line-height:25px;color:#000;font-weight:400;font-family:'Liberation Sans', sans-serif;">Maven</div>
<div style="left:1216px;top:76px;width:417px;height:1px;background:#DADADA;"></div>
<svg style="position:absolute;left:1226px;top:86px;" width="18" height="18" viewBox="0 0 18 18"><path d="M14.5 6.5 A6.5 6.5 0 0 0 3 5" fill="none" stroke="#6E6E6E" stroke-width="2"/><path d="M3.5 11.5 A6.5 6.5 0 0 0 15 13" fill="none" stroke="#6E6E6E" stroke-width="2"/><path d="M1 1.5 V7 H6.5 Z" fill="#6E6E6E"/><path d="M17 16.5 V11 H11.5 Z" fill="#6E6E6E"/></svg>
<svg style="position:absolute;left:1258px;top:85px;" width="22" height="20" viewBox="0 0 22 20"><path d="M1 2 H7 L9 4 H17 V15 H1 Z" fill="#6E6E6E"/><circle cx="16" cy="15" r="5" fill="#F2F2F2"/><path d="M19 13.5 A3.3 3.3 0 1 0 18.5 17" fill="none" stroke="#6E6E6E" stroke-width="1.4"/></svg>
<svg style="position:absolute;left:1291px;top:85px;" width="22" height="20" viewBox="0 0 22 20"><path d="M9 1 V11" stroke="#6E6E6E" stroke-width="2"/><path d="M4 7 L9 12 L14 7" fill="none" stroke="#6E6E6E" stroke-width="2"/><path d="M1 15.5 H17" stroke="#6E6E6E" stroke-width="2"/><path d="M15 16 H21 L18 19.5 Z" fill="#6E6E6E"/></svg>
<div style="left:1320px;top:84px;width:1px;height:22px;background:#D0D0D0;"></div>
<svg style="position:absolute;left:1333px;top:86px;" width="18" height="18" viewBox="0 0 18 18"><path d="M9 2 V16 M2 9 H16" stroke="#6E6E6E" stroke-width="2"/></svg>
<div style="left:1362px;top:84px;width:1px;height:22px;background:#D0D0D0;"></div>
<svg style="position:absolute;left:1375px;top:86px;" width="16" height="18" viewBox="0 0 16 18"><path d="M2 1.5 L14 9 L2 16.5 Z" fill="#BDBDBD"/></svg>
<svg style="position:absolute;left:1403px;top:84px;" width="24" height="20" viewBox="0 0 24 20"><text x="0" y="17" font-family="Liberation Sans" font-weight="700" font-style="italic" font-size="22" fill="#6E6E6E" textLength="22" lengthAdjust="spacingAndGlyphs">m</text></svg>
<svg style="position:absolute;left:1437px;top:85px;" width="22" height="20" viewBox="0 0 22 20"><path d="M1 10 H7 M15 10 H21" stroke="#6E6E6E" stroke-width="3.2"/><path d="M11 1.5 L7 18.5 M15.5 1.5 L11.5 18.5" stroke="#6E6E6E" stroke-width="2.2"/></svg>
<svg style="position:absolute;left:1470px;top:85px;" width="20" height="20" viewBox="0 0 20 20"><circle cx="10" cy="10" r="9" fill="#86CDE9"/><path d="M11.5 3.5 L6 11 H9.5 L8.5 16.5 L14 9 H10.5 Z" fill="#3D6373"/></svg>
<svg style="position:absolute;left:1503px;top:85px;" width="20" height="20" viewBox="0 0 20 20"><rect x="1" y="1" width="18" height="2.6" fill="#9AA7B0"/><rect x="1" y="16.5" width="18" height="2.6" fill="#9AA7B0"/><path d="M6 14 V6 M14 14 V6" stroke="#40B6E0" stroke-width="1.6"/><path d="M3.5 8 L6 5 L8.5 8 M11.5 8 L14 5 L16.5 8" fill="none" stroke="#40B6E0" stroke-width="1.5"/></svg>
<svg style="position:absolute;left:1536px;top:85px;" width="18" height="20" viewBox="0 0 18 20"><path d="M1 10 H17" stroke="#6E6E6E" stroke-width="2"/><path d="M4.5 2.5 L9 6.5 L13.5 2.5 Z M4.5 17.5 L9 13.5 L13.5 17.5 Z" fill="#6E6E6E"/></svg>
<div style="left:1565px;top:84px;width:1px;height:22px;background:#D0D0D0;"></div>
<svg style="position:absolute;left:1577px;top:84px;" width="22" height="22" viewBox="0 0 22 22"><path d="M3 17 L10.5 9.5" stroke="#6E6E6E" stroke-width="3.4" stroke-linecap="round"/><path d="M9 6.5 A5 5 0 0 1 16.5 2 L13.5 5 L14.5 7.5 L17 8.5 L20 5.5 A5 5 0 0 1 15.5 13 Z" fill="#6E6E6E"/><path d="M16 18 H22 L19 21.5 Z" fill="#6E6E6E"/></svg>
<div style="left:1216px;top:112px;width:417px;height:25px;background:#D5D5D5;"></div>
<div style="left:1216px;top:612px;width:417px;height:12px;background:#E2E2E2;"></div>
<div style="left:0;top:0;width:1633px;height:625px;overflow:hidden">
<svg style="position:absolute;left:1224.0px;top:119.5px;" width="14" height="10" viewBox="0 0 14 10"><path d="M2 2.5 L7 7.5 L12 2.5" fill="none" stroke="#7F7F7F" stroke-width="1.6"/></svg>
<svg style="position:absolute;left:1250px;top:116px;" width="18" height="20" viewBox="0 0 18 20"><path d="M5 1 H12 V16 H1 V5 Z" fill="#A8B1B8"/><path d="M1 5 L5 1 V5 Z" fill="#D6DADD"/><rect x="8" y="10" width="10" height="10" fill="#D5D5D5"/><text x="8" y="19" font-family="Liberation Sans" font-weight="700" font-style="italic" font-size="12" fill="#40B6E0" textLength="10" lengthAdjust="spacingAndGlyphs">m</text></svg>
<div class="t" style="left:1271.0px;top:113px;font-size:16.5px;line-height:25px;color:#000;font-weight:400;font-family:'Liberation Sans', sans-serif;">big-event</div>
<svg style="position:absolute;left:1246.5px;top:144.5px;" width="14" height="10" viewBox="0 0 14 10"><path d="M2 2.5 L7 7.5 L12 2.5" fill="none" stroke="#7F7F7F" stroke-width="1.6"/></svg>
<svg style="position:absolute;left:1270.5px;top:141px;" width="20" height="20" viewBox="0 0 20 20"><path d="M1 2 H8 L10 4 H18 V15 H1 Z" fill="#A8B1B8"/><circle cx="14.5" cy="15" r="5" fill="#fff"/></svg>
<svg style="position:absolute;left:1279.5px;top:150px;" width="11" height="11" viewBox="0 0 11 11"><circle cx="5.5" cy="5.5" r="3.6" fill="#40B6E0"/><rect x="4.4" y="0" width="2.2" height="11" fill="#40B6E0" transform="rotate(0 5.5 5.5)"/><rect x="4.4" y="0" width="2.2" height="11" fill="#40B6E0" transform="rotate(60 5.5 5.5)"/><rect x="4.4" y="0" width="2.2" height="11" fill="#40B6E0" transform="rotate(120 5.5 5.5)"/><rect x="4.4" y="0" width="2.2" height="11" fill="#40B6E0" transform="rotate(180 5.5 5.5)"/><rect x="4.4" y="0" width="2.2" height="11" fill="#40B6E0" transform="rotate(240 5.5 5.5)"/><rect x="4.4" y="0" width="2.2" height="11" fill="#40B6E0" transform="rotate(300 5.5 5.5)"/><circle cx="5.5" cy="5.5" r="1.5" fill="#fff"/></svg>
<div class="t" style="left:1293.5px;top:138px;font-size:16.5px;line-height:25px;color:#000;font-weight:400;font-family:'Liberation Sans', sans-serif;">Lifecycle</div>
<svg style="position:absolute;left:1294.0px;top:167px;" width="16" height="16" viewBox="0 0 16 16"><circle cx="8.0" cy="8.0" r="5.76" fill="#A8B1B8"/><rect x="5.92" y="0.4800000000000004" width="4.16" height="15.04" rx="0.8" fill="#A8B1B8" transform="rotate(30 8.0 8.0)"/><rect x="5.92" y="0.4800000000000004" width="4.16" height="15.04" rx="0.8" fill="#A8B1B8" transform="rotate(90 8.0 8.0)"/><rect x="5.92" y="0.4800000000000004" width="4.16" height="15.04" rx="0.8" fill="#A8B1B8" transform="rotate(150 8.0 8.0)"/><rect x="5.92" y="0.4800000000000004" width="4.16" height="15.04" rx="0.8" fill="#A8B1B8" transform="rotate(210 8.0 8.0)"/><rect x="5.92" y="0.4800000000000004" width="4.16" height="15.04" rx="0.8" fill="#A8B1B8" transform="rotate(270 8.0 8.0)"/><rect x="5.92" y="0.4800000000000004" width="4.16" height="15.04" rx="0.8" fill="#A8B1B8" transform="rotate(330 8.0 8.0)"/><circle cx="8.0" cy="8.0" r="2.72" fill="#fff"/></svg>
<div class="t" style="left:1316.0px;top:163px;font-size:16.5px;line-height:25px;color:#000;font-weight:400;font-family:'Liberation Sans', sans-serif;">clean</div>
<svg style="position:absolute;left:1294.0px;top:192px;" width="16" height="16" viewBox="0 0 16 16"><circle cx="8.0" cy="8.0" r="5.76" fill="#A8B1B8"/><rect x="5.92" y="0.4800000000000004" width="4.16" height="15.04" rx="0.8" fill="#A8B1B8" transform="rotate(30 8.0 8.0)"/><rect x="5.92" y="0.4800000000000004" width="4.16" height="15.04" rx="0.8" fill="#A8B1B8" transform="rotate(90 8.0 8.0)"/><rect x="5.92" y="0.4800000000000004" width="4.16" height="15.04" rx="0.8" fill="#A8B1B8" transform="rotate(150 8.0 8.0)"/><rect x="5.92" y="0.4800000000000004" width="4.16" height="15.04" rx="0.8" fill="#A8B1B8" transform="rotate(210 8.0 8.0)"/><rect x="5.92" y="0.4800000000000004" width="4.16" height="15.04" rx="0.8" fill="#A8B1B8" transform="rotate(270 8.0 8.0)"/><rect x="5.92" y="0.4800000000000004" width="4.16" height="15.04" rx="0.8" fill="#A8B1B8" transform="rotate(330 8.0 8.0)"/><circle cx="8.0" cy="8.0" r="2.72" fill="#fff"/></svg>
<div class="t" style="left:1316.0px;top:188px;font-size:16.5px;line-height:25px;color:#000;font-weight:400;font-family:'Liberation Sans', sans-serif;">validate</div>
<svg style="position:absolute;left:1294.0px;top:217px;" width="16" height="16" viewBox="0 0 16 16"><circle cx="8.0" cy="8.0" r="5.76" fill="#A8B1B8"/><rect x="5.92" y="0.4800000000000004" width="4.16" height="15.04" rx="0.8" fill="#A8B1B8" transform="rotate(30 8.0 8.0)"/><rect x="5.92" y="0.4800000000000004" width="4.16" height="15.04" rx="0.8" fill="#A8B1B8" transform="rotate(90 8.0 8.0)"/><rect x="5.92" y="0.4800000000000004" width="4.16" height="15.04" rx="0.8" fill="#A8B1B8" transform="rotate(150 8.0 8.0)"/><rect x="5.92" y="0.4800000000000004" width="4.16" height="15.04" rx="0.8" fill="#A8B1B8" transform="rotate(210 8.0 8.0)"/><rect x="5.92" y="0.4800000000000004" width="4.16" height="15.04" rx="0.8" fill="#A8B1B8" transform="rotate(270 8.0 8.0)"/><rect x="5.92" y="0.4800000000000004" width="4.16" height="15.04" rx="0.8" fill="#A8B1B8" transform="rotate(330 8.0 8.0)"/><circle cx="8.0" cy="8.0" r="2.72" fill="#fff"/></svg>
<div class="t" style="left:1316.0px;top:213px;font-size:16.5px;line-height:25px;color:#000;font-weight:400;font-family:'Liberation Sans', sans-serif;">compile</div>
<svg style="position:absolute;left:1294.0px;top:242px;" width="16" height="16" viewBox="0 0 16 16"><circle cx="8.0" cy="8.0" r="5.76" fill="#A8B1B8"/><rect x="5.92" y="0.4800000000000004" width="4.16" height="15.04" rx="0.8" fill="#A8B1B8" transform="rotate(30 8.0 8.0)"/><rect x="5.92" y="0.4800000000000004" width="4.16" height="15.04" rx="0.8" fill="#A8B1B8" transform="rotate(90 8.0 8.0)"/><rect x="5.92" y="0.4800000000000004" width="4.16" height="15.04" rx="0.8" fill="#A8B1B8" transform="rotate(150 8.0 8.0)"/><rect x="5.92" y="0.4800000000000004" width="4.16" height="15.04" rx="0.8" fill="#A8B1B8" transform="rotate(210 8.0 8.0)"/><rect x="5.92" y="0.4800000000000004" width="4.16" height="15.04" rx="0.8" fill="#A8B1B8" transform="rotate(270 8.0 8.0)"/><rect x="5.92" y="0.4800000000000004" width="4.16" height="15.04" rx="0.8" fill="#A8B1B8" transform="rotate(330 8.0 8.0)"/><circle cx="8.0" cy="8.0" r="2.72" fill="#fff"/></svg>
<div class="t" style="left:1316.0px;top:238px;font-size:16.5px;line-height:25px;color:#000;font-weight:400;font-family:'Liberation Sans', sans-serif;">test</div>
<svg style="position:absolute;left:1294.0px;top:267px;" width="16" height="16" viewBox="0 0 16 16"><circle cx="8.0" cy="8.0" r="5.76" fill="#A8B1B8"/><rect x="5.92" y="0.4800000000000004" width="4.16" height="15.04" rx="0.8" fill="#A8B1B8" transform="rotate(30 8.0 8.0)"/><rect x="5.92" y="0.4800000000000004" width="4.16" height="15.04" rx="0.8" fill="#A8B1B8" transform="rotate(90 8.0 8.0)"/><rect x="5.92" y="0.4800000000000004" width="4.16" height="15.04" rx="0.8" fill="#A8B1B8" transform="rotate(150 8.0 8.0)"/><rect x="5.92" y="0.4800000000000004" width="4.16" height="15.04" rx="0.8" fill="#A8B1B8" transform="rotate(210 8.0 8.0)"/><rect x="5.92" y="0.4800000000000004" width="4.16" height="15.04" rx="0.8" fill="#A8B1B8" transform="rotate(270 8.0 8.0)"/><rect x="5.92" y="0.4800000000000004" width="4.16" height="15.04" rx="0.8" fill="#A8B1B8" transform="rotate(330 8.0 8.0)"/><circle cx="8.0" cy="8.0" r="2.72" fill="#fff"/></svg>
<div class="t" style="left:1316.0px;top:263px;font-size:16.5px;line-height:25px;color:#000;font-weight:400;font-family:'Liberation Sans', sans-serif;">package</div>
<svg style="position:absolute;left:1294.0px;top:292px;" width="16" height="16" viewBox="0 0 16 16"><circle cx="8.0" cy="8.0" r="5.76" fill="#A8B1B8"/><rect x="5.92" y="0.4800000000000004" width="4.16" height="15.04" rx="0.8" fill="#A8B1B8" transform="rotate(30 8.0 8.0)"/><rect x="5.92" y="0.4800000000000004" width="4.16" height="15.04" rx="0.8" fill="#A8B1B8" transform="rotate(90 8.0 8.0)"/><rect x="5.92" y="0.4800000000000004" width="4.16" height="15.04" rx="0.8" fill="#A8B1B8" transform="rotate(150 8.0 8.0)"/><rect x="5.92" y="0.4800000000000004" width="4.16" height="15.04" rx="0.8" fill="#A8B1B8" transform="rotate(210 8.0 8.0)"/><rect x="5.92" y="0.4800000000000004" width="4.16" height="15.04" rx="0.8" fill="#A8B1B8" transform="rotate(270 8.0 8.0)"/><rect x="5.92" y="0.4800000000000004" width="4.16" height="15.04" rx="0.8" fill="#A8B1B8" transform="rotate(330 8.0 8.0)"/><circle cx="8.0" cy="8.0" r="2.72" fill="#fff"/></svg>
<div class="t" style="left:1316.0px;top:288px;font-size:16.5px;line-height:25px;color:#000;font-weight:400;font-family:'Liberation Sans', sans-serif;">verify</div>
<svg style="position:absolute;left:1294.0px;top:317px;" width="16" height="16" viewBox="0 0 16 16"><circle cx="8.0" cy="8.0" r="5.76" fill="#A8B1B8"/><rect x="5.92" y="0.4800000000000004" width="4.16" height="15.04" rx="0.8" fill="#A8B1B8" transform="rotate(30 8.0 8.0)"/><rect x="5.92" y="0.4800000000000004" width="4.16" height="15.04" rx="0.8" fill="#A8B1B8" transform="rotate(90 8.0 8.0)"/><rect x="5.92" y="0.4800000000000004" width="4.16" height="15.04" rx="0.8" fill="#A8B1B8" transform="rotate(150 8.0 8.0)"/><rect x="5.92" y="0.4800000000000004" width="4.16" height="15.04" rx="0.8" fill="#A8B1B8" transform="rotate(210 8.0 8.0)"/><rect x="5.92" y="0.4800000000000004" width="4.16" height="15.04" rx="0.8" fill="#A8B1B8" transform="rotate(270 8.0 8.0)"/><rect x="5.92" y="0.4800000000000004" width="4.16" height="15.04" rx="0.8" fill="#A8B1B8" transform="rotate(330 8.0 8.0)"/><circle cx="8.0" cy="8.0" r="2.72" fill="#fff"/></svg>
<div class="t" style="left:1316.0px;top:313px;font-size:16.5px;line-height:25px;color:#000;font-weight:400;font-family:'Liberation Sans', sans-serif;">install</div>
<svg style="position:absolute;left:1294.0px;top:342px;" width="16" height="16" viewBox="0 0 16 16"><circle cx="8.0" cy="8.0" r="5.76" fill="#A8B1B8"/><rect x="5.92" y="0.4800000000000004" width="4.16" height="15.04" rx="0.8" fill="#A8B1B8" transform="rotate(30 8.0 8.0)"/><rect x="5.92" y="0.4800000000000004" width="4.16" height="15.04" rx="0.8" fill="#A8B1B8" transform="rotate(90 8.0 8.0)"/><rect x="5.92" y="0.4800000000000004" width="4.16" height="15.04" rx="0.8" fill="#A8B1B8" transform="rotate(150 8.0 8.0)"/><rect x="5.92" y="0.4800000000000004" width="4.16" height="15.04" rx="0.8" fill="#A8B1B8" transform="rotate(210 8.0 8.0)"/><rect x="5.92" y="0.4800000000000004" width="4.16" height="15.04" rx="0.8" fill="#A8B1B8" transform="rotate(270 8.0 8.0)"/><rect x="5.92" y="0.4800000000000004" width="4.16" height="15.04" rx="0.8" fill="#A8B1B8" transform="rotate(330 8.0 8.0)"/><circle cx="8.0" cy="8.0" r="2.72" fill="#fff"/></svg>
<div class="t" style="left:1316.0px;top:338px;font-size:16.5px;line-height:25px;color:#000;font-weight:400;font-family:'Liberation Sans', sans-serif;">site</div>
<svg style="position:absolute;left:1294.0px;top:367px;" width="16" height="16" viewBox="0 0 16 16"><circle cx="8.0" cy="8.0" r="5.76" fill="#A8B1B8"/><rect x="5.92" y="0.4800000000000004" width="4.16" height="15.04" rx="0.8" fill="#A8B1B8" transform="rotate(30 8.0 8.0)"/><rect x="5.92" y="0.4800000000000004" width="4.16" height="15.04" rx="0.8" fill="#A8B1B8" transform="rotate(90 8.0 8.0)"/><rect x="5.92" y="0.4800000000000004" width="4.16" height="15.04" rx="0.8" fill="#A8B1B8" transform="rotate(150 8.0 8.0)"/><rect x="5.92" y="0.4800000000000004" width="4.16" height="15.04" rx="0.8" fill="#A8B1B8" transform="rotate(210 8.0 8.0)"/><rect x="5.92" y="0.4800000000000004" width="4.16" height="15.04" rx="0.8" fill="#A8B1B8" transform="rotate(270 8.0 8.0)"/><rect x="5.92" y="0.4800000000000004" width="4.16" height="15.04" rx="0.8" fill="#A8B1B8" transform="rotate(330 8.0 8.0)"/><circle cx="8.0" cy="8.0" r="2.72" fill="#fff"/></svg>
<div class="t" style="left:1316.0px;top:363px;font-size:16.5px;line-height:25px;color:#000;font-weight:400;font-family:'Liberation Sans', sans-serif;">deploy</div>
<svg style="position:absolute;left:1246.5px;top:394.5px;" width="14" height="10" viewBox="0 0 14 10"><path d="M2 2.5 L7 7.5 L12 2.5" fill="none" stroke="#7F7F7F" stroke-width="1.6"/></svg>
<svg style="position:absolute;left:1270.5px;top:391px;" width="20" height="20" viewBox="0 0 20 20"><path d="M1 2 H8 L10 4 H18 V15 H1 Z" fill="#A8B1B8"/><circle cx="14.5" cy="15" r="5" fill="#fff"/></svg>
<svg style="position:absolute;left:1279.5px;top:400px;" width="11" height="11" viewBox="0 0 11 11"><circle cx="5.5" cy="5.5" r="3.6" fill="#40B6E0"/><rect x="4.4" y="0" width="2.2" height="11" fill="#40B6E0" transform="rotate(0 5.5 5.5)"/><rect x="4.4" y="0" width="2.2" height="11" fill="#40B6E0" transform="rotate(60 5.5 5.5)"/><rect x="4.4" y="0" width="2.2" height="11" fill="#40B6E0" transform="rotate(120 5.5 5.5)"/><rect x="4.4" y="0" width="2.2" height="11" fill="#40B6E0" transform="rotate(180 5.5 5.5)"/><rect x="4.4" y="0" width="2.2" height="11" fill="#40B6E0" transform="rotate(240 5.5 5.5)"/><rect x="4.4" y="0" width="2.2" height="11" fill="#40B6E0" transform="rotate(300 5.5 5.5)"/><circle cx="5.5" cy="5.5" r="1.5" fill="#fff"/></svg>
<div class="t" style="left:1293.5px;top:388px;font-size:16.5px;line-height:25px;color:#000;font-weight:400;font-family:'Liberation Sans', sans-serif;">Plugins</div>
<svg style="position:absolute;left:1271.0px;top:417.5px;" width="10" height="14" viewBox="0 0 10 14"><path d="M2.5 2 L7.5 7 L2.5 12" fill="none" stroke="#7F7F7F" stroke-width="1.6"/></svg>
<svg style="position:absolute;left:1293.0px;top:415px;" width="22" height="22" viewBox="0 0 22 22"><path d="M8.5 2.5 A7.5 7.5 0 0 0 8.5 17.5" fill="none" stroke="#A9B4BC" stroke-width="1.4"/><rect x="6" y="1.5" width="8" height="11" rx="1.5" fill="#A9B4BC"/><rect x="13" y="3" width="5" height="1.8" fill="#A9B4BC"/><rect x="13" y="8" width="5" height="1.8" fill="#A9B4BC"/><text x="7" y="21" font-family="Liberation Sans" font-weight="700" font-style="italic" font-size="13" fill="#40B6E0" stroke="#40B6E0" stroke-width="0.5" textLength="11" lengthAdjust="spacingAndGlyphs">m</text></svg>
<div class="t" style="left:1316.0px;top:413px;font-size:16.5px;line-height:25px;color:#000;font-weight:400;font-family:'Liberation Sans', sans-serif;">clean<span style="color:#808080"> (org.apache.maven.plugins:maven-clean-plugin:3.1.0)</span></div>
<svg style="position:absolute;left:1271.0px;top:442.5px;" width="10" height="14" viewBox="0 0 10 14"><path d="M2.5 2 L7.5 7 L2.5 12" fill="none" stroke="#7F7F7F" stroke-width="1.6"/></svg>
<svg style="position:absolute;left:1293.0px;top:440px;" width="22" height="22" viewBox="0 0 22 22"><path d="M8.5 2.5 A7.5 7.5 0 0 0 8.5 17.5" fill="none" stroke="#A9B4BC" stroke-width="1.4"/><rect x="6" y="1.5" width="8" height="11" rx="1.5" fill="#A9B4BC"/><rect x="13" y="3" width="5" height="1.8" fill="#A9B4BC"/><rect x="13" y="8" width="5" height="1.8" fill="#A9B4BC"/><text x="7" y="21" font-family="Liberation Sans" font-weight="700" font-style="italic" font-size="13" fill="#40B6E0" stroke="#40B6E0" stroke-width="0.5" textLength="11" lengthAdjust="spacingAndGlyphs">m</text></svg>
<div class="t" style="left:1316.0px;top:438px;font-size:16.5px;line-height:25px;color:#000;font-weight:400;font-family:'Liberation Sans', sans-serif;">compiler<span style="color:#808080"> (org.apache.maven.plugins:maven-compiler-plugin:3.8.1)</span></div>
<svg style="position:absolute;left:1271.0px;top:467.5px;" width="10" height="14" viewBox="0 0 10 14"><path d="M2.5 2 L7.5 7 L2.5 12" fill="none" stroke="#7F7F7F" stroke-width="1.6"/></svg>
<svg style="position:absolute;left:1293.0px;top:465px;" width="22" height="22" viewBox="0 0 22 22"><path d="M8.5 2.5 A7.5 7.5 0 0 0 8.5 17.5" fill="none" stroke="#A9B4BC" stroke-width="1.4"/><rect x="6" y="1.5" width="8" height="11" rx="1.5" fill="#A9B4BC"/><rect x="13" y="3" width="5" height="1.8" fill="#A9B4BC"/><rect x="13" y="8" width="5" height="1.8" fill="#A9B4BC"/><text x="7" y="21" font-family="Liberation Sans" font-weight="700" font-style="italic" font-size="13" fill="#40B6E0" stroke="#40B6E0" stroke-width="0.5" textLength="11" lengthAdjust="spacingAndGlyphs">m</text></svg>
<div class="t" style="left:1316.0px;top:463px;font-size:16.5px;line-height:25px;color:#000;font-weight:400;font-family:'Liberation Sans', sans-serif;">deploy<span style="color:#808080"> (org.apache.maven.plugins:maven-deploy-plugin:2.8.2)</span></div>
<svg style="position:absolute;left:1271.0px;top:492.5px;" width="10" height="14" viewBox="0 0 10 14"><path d="M2.5 2 L7.5 7 L2.5 12" fill="none" stroke="#7F7F7F" stroke-width="1.6"/></svg>
<svg style="position:absolute;left:1293.0px;top:490px;" width="22" height="22" viewBox="0 0 22 22"><path d="M8.5 2.5 A7.5 7.5 0 0 0 8.5 17.5" fill="none" stroke="#A9B4BC" stroke-width="1.4"/><rect x="6" y="1.5" width="8" height="11" rx="1.5" fill="#A9B4BC"/><rect x="13" y="3" width="5" height="1.8" fill="#A9B4BC"/><rect x="13" y="8" width="5" height="1.8" fill="#A9B4BC"/><text x="7" y="21" font-family="Liberation Sans" font-weight="700" font-style="italic" font-size="13" fill="#40B6E0" stroke="#40B6E0" stroke-width="0.5" textLength="11" lengthAdjust="spacingAndGlyphs">m</text></svg>
<div class="t" style="left:1316.0px;top:488px;font-size:16.5px;line-height:25px;color:#000;font-weight:400;font-family:'Liberation Sans', sans-serif;">install<span style="color:#808080"> (org.apache.maven.plugins:maven-install-plugin:2.5.2)</span></div>
<svg style="position:absolute;left:1271.0px;top:517.5px;" width="10" height="14" viewBox="0 0 10 14"><path d="M2.5 2 L7.5 7 L2.5 12" fill="none" stroke="#7F7F7F" stroke-width="1.6"/></svg>
<svg style="position:absolute;left:1293.0px;top:515px;" width="22" height="22" viewBox="0 0 22 22"><path d="M8.5 2.5 A7.5 7.5 0 0 0 8.5 17.5" fill="none" stroke="#A9B4BC" stroke-width="1.4"/><rect x="6" y="1.5" width="8" height="11" rx="1.5" fill="#A9B4BC"/><rect x="13" y="3" width="5" height="1.8" fill="#A9B4BC"/><rect x="13" y="8" width="5" height="1.8" fill="#A9B4BC"/><text x="7" y="21" font-family="Liberation Sans" font-weight="700" font-style="italic" font-size="13" fill="#40B6E0" stroke="#40B6E0" stroke-width="0.5" textLength="11" lengthAdjust="spacingAndGlyphs">m</text></svg>
<div class="t" style="left:1316.0px;top:513px;font-size:16.5px;line-height:25px;color:#000;font-weight:400;font-family:'Liberation Sans', sans-serif;">jar<span style="color:#808080"> (org.apache.maven.plugins:maven-jar-plugin:3.2.2)</span></div>
<svg style="position:absolute;left:1271.0px;top:542.5px;" width="10" height="14" viewBox="0 0 10 14"><path d="M2.5 2 L7.5 7 L2.5 12" fill="none" stroke="#7F7F7F" stroke-width="1.6"/></svg>
<svg style="position:absolute;left:1293.0px;top:540px;" width="22" height="22" viewBox="0 0 22 22"><path d="M8.5 2.5 A7.5 7.5 0 0 0 8.5 17.5" fill="none" stroke="#A9B4BC" stroke-width="1.4"/><rect x="6" y="1.5" width="8" height="11" rx="1.5" fill="#A9B4BC"/><rect x="13" y="3" width="5" height="1.8" fill="#A9B4BC"/><rect x="13" y="8" width="5" height="1.8" fill="#A9B4BC"/><text x="7" y="21" font-family="Liberation Sans" font-weight="700" font-style="italic" font-size="13" fill="#40B6E0" stroke="#40B6E0" stroke-width="0.5" textLength="11" lengthAdjust="spacingAndGlyphs">m</text></svg>
<div class="t" style="left:1316.0px;top:538px;font-size:16.5px;line-height:25px;color:#000;font-weight:400;font-family:'Liberation Sans', sans-serif;">resources<span style="color:#808080"> (org.apache.maven.plugins:maven-resources-plugin:3.2.0)</span></div>
<svg style="position:absolute;left:1271.0px;top:567.5px;" width="10" height="14" viewBox="0 0 10 14"><path d="M2.5 2 L7.5 7 L2.5 12" fill="none" stroke="#7F7F7F" stroke-width="1.6"/></svg>
<svg style="position:absolute;left:1293.0px;top:565px;" width="22" height="22" viewBox="0 0 22 22"><path d="M8.5 2.5 A7.5 7.5 0 0 0 8.5 17.5" fill="none" stroke="#A9B4BC" stroke-width="1.4"/><rect x="6" y="1.5" width="8" height="11" rx="1.5" fill="#A9B4BC"/><rect x="13" y="3" width="5" height="1.8" fill="#A9B4BC"/><rect x="13" y="8" width="5" height="1.8" fill="#A9B4BC"/><text x="7" y="21" font-family="Liberation Sans" font-weight="700" font-style="italic" font-size="13" fill="#40B6E0" stroke="#40B6E0" stroke-width="0.5" textLength="11" lengthAdjust="spacingAndGlyphs">m</text></svg>
<div class="t" style="left:1316.0px;top:563px;font-size:16.5px;line-height:25px;color:#000;font-weight:400;font-family:'Liberation Sans', sans-serif;">site<span style="color:#808080"> (org.apache.maven.plugins:maven-site-plugin:3.3)</span></div>
<svg style="position:absolute;left:1271.0px;top:592.5px;" width="10" height="14" viewBox="0 0 10 14"><path d="M2.5 2 L7.5 7 L2.5 12" fill="none" stroke="#7F7F7F" stroke-width="1.6"/></svg>
<svg style="position:absolute;left:1293.0px;top:590px;" width="22" height="22" viewBox="0 0 22 22"><path d="M8.5 2.5 A7.5 7.5 0 0 0 8.5 17.5" fill="none" stroke="#A9B4BC" stroke-width="1.4"/><rect x="6" y="1.5" width="8" height="11" rx="1.5" fill="#A9B4BC"/><rect x="13" y="3" width="5" height="1.8" fill="#A9B4BC"/><rect x="13" y="8" width="5" height="1.8" fill="#A9B4BC"/><text x="7" y="21" font-family="Liberation Sans" font-weight="700" font-style="italic" font-size="13" fill="#40B6E0" stroke="#40B6E0" stroke-width="0.5" textLength="11" lengthAdjust="spacingAndGlyphs">m</text></svg>
<div class="t" style="left:1316.0px;top:588px;font-size:16.5px;line-height:25px;color:#000;font-weight:400;font-family:'Liberation Sans', sans-serif;">spring-boot<span style="color:#808080"> (org.springframework.boot:spring-boot-maven-plugin:2.6.13)</span></div>
<svg style="position:absolute;left:1271.0px;top:617.5px;" width="10" height="14" viewBox="0 0 10 14"><path d="M2.5 2 L7.5 7 L2.5 12" fill="none" stroke="#7F7F7F" stroke-width="1.6"/></svg>
<svg style="position:absolute;left:1293.0px;top:615px;" width="22" height="22" viewBox="0 0 22 22"><path d="M8.5 2.5 A7.5 7.5 0 0 0 8.5 17.5" fill="none" stroke="#A9B4BC" stroke-width="1.4"/><rect x="6" y="1.5" width="8" height="11" rx="1.5" fill="#A9B4BC"/><rect x="13" y="3" width="5" height="1.8" fill="#A9B4BC"/><rect x="13" y="8" width="5" height="1.8" fill="#A9B4BC"/><text x="7" y="21" font-family="Liberation Sans" font-weight="700" font-style="italic" font-size="13" fill="#40B6E0" stroke="#40B6E0" stroke-width="0.5" textLength="11" lengthAdjust="spacingAndGlyphs">m</text></svg>
<div class="t" style="left:1316.0px;top:613px;font-size:16.5px;line-height:25px;color:#000;font-weight:400;font-family:'Liberation Sans', sans-serif;">surefire<span style="color:#808080"> (org.apache.maven.plugins:maven-surefire-plugin:2.4.2)</span></div>
</div>
<svg style="position:absolute;left:1221px;top:14px;" width="34" height="22" viewBox="0 0 34 22"><circle cx="13.5" cy="6" r="4" fill="#8C8C8C"/><path d="M8 17 C8 11.5 19.5 11.5 19.5 17 Z" fill="#8C8C8C"/><circle cx="8" cy="7.5" r="4.6" fill="#6E6E6E" stroke="#F2F2F2" stroke-width="1.2"/><path d="M0.5 19.5 C0.5 12.5 15.5 12.5 15.5 19.5 Z" fill="#6E6E6E" stroke="#F2F2F2" stroke-width="1.2"/><path d="M23 10.5 H32 L27.5 15.5 Z" fill="#6E6E6E"/></svg>
<div style="left:1263px;top:13px;width:1px;height:24px;background:#D0D0D0;"></div>
<svg style="position:absolute;left:1273px;top:14px;" width="22" height="22" viewBox="0 0 22 22"><path d="M2 9 L9 2 L13 6 L6 13 Z" fill="#499C54"/><path d="M9 9 L19 19" stroke="#499C54" stroke-width="3.4"/></svg>
<div style="left:1308px;top:12px;width:197px;height:26px;background:#FFFFFF;border:1px solid #C4C4C4;border-radius:3px"></div>
<svg style="position:absolute;left:1320px;top:17px;" width="16" height="16" viewBox="0 0 16 16"><path d="M7 2 L1 8 L7 14 Z" fill="#F5C6B4"/><path d="M9 2 L15 8 L9 14 Z" fill="#B6DDB8"/></svg>
<div class="t" style="left:1344px;top:13.5px;font-size:16.5px;line-height:25px;color:#000;font-weight:400;font-family:'Liberation Sans', sans-serif;">RedisTest.testGet</div>
<svg style="position:absolute;left:1482px;top:21px;" width="12" height="8" viewBox="0 0 12 8"><path d="M0 0 H12 L6 7 Z" fill="#6E6E6E"/></svg>
<svg style="position:absolute;left:1521px;top:16px;" width="16" height="18" viewBox="0 0 16 18"><path d="M2 1.5 L14.5 9 L2 16.5 Z" fill="#59A869"/></svg>
<svg style="position:absolute;left:1550px;top:14px;" width="20" height="22" viewBox="0 0 20 22"><path d="M5.5 3 L8.3 6 M14.5 3 L11.7 6" stroke="#59A869" stroke-width="1.8"/><path d="M2 8.3 H18 M2 12.4 H18 M2 16.6 H18" stroke="#59A869" stroke-width="1.8"/><rect x="4.5" y="5" width="11" height="14.8" rx="5.5" fill="#59A869"/><rect x="8" y="9.4" width="4" height="1.6" fill="#F2F2F2"/><rect x="8" y="13.5" width="4" height="1.6" fill="#F2F2F2"/></svg>
<svg style="position:absolute;left:1582px;top:14px;" width="24" height="22" viewBox="0 0 24 22"><path d="M2 3.5 C5 2.5 12 2.5 15 3.5 V7 H13 V17 L8.5 19 C5 17 2 14 2 10 Z" fill="#6E6E6E"/><rect x="10.5" y="5.5" width="1.6" height="12" fill="#F2F2F2"/><path d="M12 10 L21 15.5 L12 21 Z" fill="#59A869"/></svg>
<svg style="position:absolute;left:1612px;top:14px;" width="24" height="22" viewBox="0 0 24 22"><circle cx="9" cy="10" r="7.5" fill="none" stroke="#BDBDBD" stroke-width="1.8"/><path d="M9 5 V10 L12 12" fill="none" stroke="#BDBDBD" stroke-width="1.6"/><path d="M14 10 L23 15.5 L14 21 Z" fill="#BDBDBD"/></svg>
<div class="t" style="left:-18px;top:631px;font-size:16.5px;line-height:25px;color:#000;font-weight:400;font-family:'Liberation Sans', sans-serif;">Run:</div>
<svg style="position:absolute;left:41px;top:634px;" width="22" height="20" viewBox="0 0 22 20"><path d="M1 12 C2 5 9 3 17 2 C16 9 12 14 3 14 Z" fill="#A9D3A9"/><polygon points="12,8 16.5,10.5 16.5,15.5 12,18 7.5,15.5 7.5,10.5" fill="#B7BDC2"/><circle cx="12" cy="13" r="2" fill="none" stroke="#fff" stroke-width="1"/><circle cx="17" cy="16" r="3" fill="#50C25F"/></svg>
<div class="t" style="left:65px;top:631px;font-size:16.5px;line-height:25px;color:#000;font-weight:400;font-family:'Liberation Sans', sans-serif;">BigEventApplication</div>
<svg style="position:absolute;left:222px;top:638px;" width="11" height="11" viewBox="0 0 11 11"><path d="M1 1 L10 10 M10 1 L1 10" stroke="#ABABAB" stroke-width="1.3"/></svg>
<svg style="position:absolute;left:261px;top:636px;" width="20" height="18" viewBox="0 0 20 18"><text x="0.5" y="14.5" font-family="Liberation Sans" font-weight="700" font-style="italic" font-size="21" fill="#A7DCF1" stroke="#A7DCF1" stroke-width="0.9" textLength="16.5" lengthAdjust="spacingAndGlyphs">m</text></svg>
<div class="t" style="left:285px;top:631px;font-size:16.5px;line-height:25px;color:#000;font-weight:400;font-family:'Liberation Sans', sans-serif;">big-event [package]</div>
<svg style="position:absolute;left:440px;top:638px;" width="11" height="11" viewBox="0 0 11 11"><path d="M1 1 L10 10 M10 1 L1 10" stroke="#ABABAB" stroke-width="1.3"/></svg>
<div style="left:245px;top:656px;width:219px;height:3px;background:#9CA7B8;"></div>
<svg style="position:absolute;left:0px;top:660px;" width="11" height="200" viewBox="0 0 11 200"><rect x="0" y="15" width="1.5" height="2" fill="#59A869"/><circle cx="-3" cy="49" r="7" fill="#C9C9C9"/><rect x="0" y="70" width="6" height="1" fill="#D0D0D0"/><rect x="0" y="85" width="1.5" height="12" fill="#D6D6D6"/><circle cx="0" cy="122" r="4" fill="#5A5A5A"/><path d="M0 130 H6 L3 134 Z" fill="#3C3C3C"/><rect x="0" y="150" width="4" height="14" fill="#D6D6D6"/><path d="M0 185 H5 V200 H0 Z" fill="#C9C9C9"/></svg>
<svg style="position:absolute;left:19.5px;top:666px;" width="14" height="10" viewBox="0 0 14 10"><path d="M2 2.5 L7 7.5 L12 2.5" fill="none" stroke="#7F7F7F" stroke-width="1.6"/></svg>
<svg style="position:absolute;left:44px;top:663px;" width="18" height="16" viewBox="0 0 18 16"><path d="M9.0 0.5 L17.5 15.5 H0.5 Z" fill="#F4AF3D"/><rect x="8.0" y="5.28" width="2" height="5.6" fill="#fff"/><rect x="8.0" y="12.16" width="2" height="2" fill="#fff"/></svg>
<div class="t" style="left:67px;top:659px;font-size:16.2px;line-height:25px;color:#000;font-weight:700;font-family:'Liberation Sans', sans-serif;">big-event [package]:</div>
<div class="t" style="left:229px;top:659px;font-size:16.5px;line-height:25px;color:#8C8C8C;font-weight:400;font-family:'Liberation Sans', sans-serif;">At 2024-04-27 13:59 with 1 warning</div>
<div class="t" style="left:654px;top:660px;font-size:13.6px;line-height:25px;color:#A0A0A0;font-weight:400;font-family:'Liberation Sans', sans-serif;">13 sec, 829 ms</div>
<svg style="position:absolute;left:66px;top:688px;" width="18" height="16" viewBox="0 0 18 16"><path d="M9.0 0.5 L17.5 15.5 H0.5 Z" fill="#F4AF3D"/><rect x="8.0" y="5.28" width="2" height="5.6" fill="#fff"/><rect x="8.0" y="12.16" width="2" height="2" fill="#fff"/></svg>
<div style="left:0;top:660px;width:752px;height:200px;overflow:hidden">
<div class="t" style="left:89px;top:24px;font-size:16.5px;line-height:25px;color:#000;font-weight:400;font-family:'Liberation Sans', sans-serif;">For this reason, future Maven versions might no longer support building such malformed projects.</div>
</div>
<div style="left:753px;top:660px;width:880px;height:200px;overflow:hidden">
<div class="t" style="left:15px;top:-13.25px;font-family:'Liberation Mono', monospace;font-size:16.6px;line-height:27.5px;color:#000">[INFO] --- maven-jar-plugin:2.4:jar (default-jar) @ big-event ---</div>
<div class="t" style="left:15px;top:14.17999999999995px;font-family:'Liberation Mono', monospace;font-size:16.6px;line-height:27.5px;color:#000">[INFO] Building jar: E:\Intellij IDEA\<svg width="33" height="20" viewBox="0 0 33 20" style="display:inline-block;vertical-align:-3px"><g fill="none" stroke="#000" stroke-width="1.15"><path d="M1 4.5 H6.5 M3.8 4.5 V14.5 M0.8 15.5 L7 12.5"/><path d="M7.5 2.5 H16 M11.5 2.5 L10.5 5 M8.7 5.5 H14.8 V14 H8.7 Z M11.8 7.5 V12.5 M10.8 14 L7.5 17.5 M13 14.5 L16 17.5"/><path d="M19.8 2 H29 V17.5 H19.8 Z M19.8 7.2 H29 M19.8 12.3 H29"/></g></svg>\big-event\target\big-event-0.0.1-SNAPSHOT.jar</div>
<div class="t" style="left:15px;top:41.610000000000014px;font-family:'Liberation Mono', monospace;font-size:16.6px;line-height:27.5px;color:#000">[INFO]</div>
<div class="t" style="left:15px;top:69.03999999999996px;font-family:'Liberation Mono', monospace;font-size:16.6px;line-height:27.5px;color:#000">[INFO] --- spring-boot-maven-plugin:2.6.13:repackage (repackage) @ big-event ---</div>
<div class="t" style="left:15px;top:96.47000000000003px;font-family:'Liberation Mono', monospace;font-size:16.6px;line-height:27.5px;color:#000">[INFO] ------------------------------------------------------------------------</div>
<div class="t" style="left:15px;top:123.89999999999998px;font-family:'Liberation Mono', monospace;font-size:16.6px;line-height:27.5px;color:#000">[INFO] BUILD SUCCESS</div>
<div class="t" style="left:15px;top:151.32999999999993px;font-family:'Liberation Mono', monospace;font-size:16.6px;line-height:27.5px;color:#000">[INFO] ------------------------------------------------------------------------</div>
<div class="t" style="left:15px;top:178.76px;font-family:'Liberation Mono', monospace;font-size:16.6px;line-height:27.5px;color:#000">[INFO] Total time:  9.773 s</div>
</div>
<div style="left:21px;top:542px;width:320px;height:30px;background:transparent;border:3px solid #FB3838"></div>
<div style="left:1272px;top:257px;width:164px;height:39px;background:transparent;border:7px solid #FB3838"></div>
<div style="left:822px;top:778px;width:220px;height:35px;background:transparent;border:3px solid #FB3838"></div>
<svg style="position:absolute;left:0;top:0" width="1633" height="860" viewBox="0 0 1633 860"><path d="M1504.7 176.7 L1455.7 218.3 L1450.5 215.6 L1443.0 234.0 L1462.0 228.1 L1459.8 222.7 L1505.3 177.3 Z" fill="#FB3838"/><path d="M1204.6 403.8 L1041.4 710.8 L1035.8 710.1 L1035.0 730.0 L1050.9 718.0 L1047.1 713.8 L1205.4 404.2 Z" fill="#FB3838"/><path d="M747.2 757.6 L365.5 585.7 L366.1 579.4 L344.0 580.0 L358.5 596.8 L362.7 592.1 L746.8 758.4 Z" fill="#FB3838"/></svg>
</body></html>
